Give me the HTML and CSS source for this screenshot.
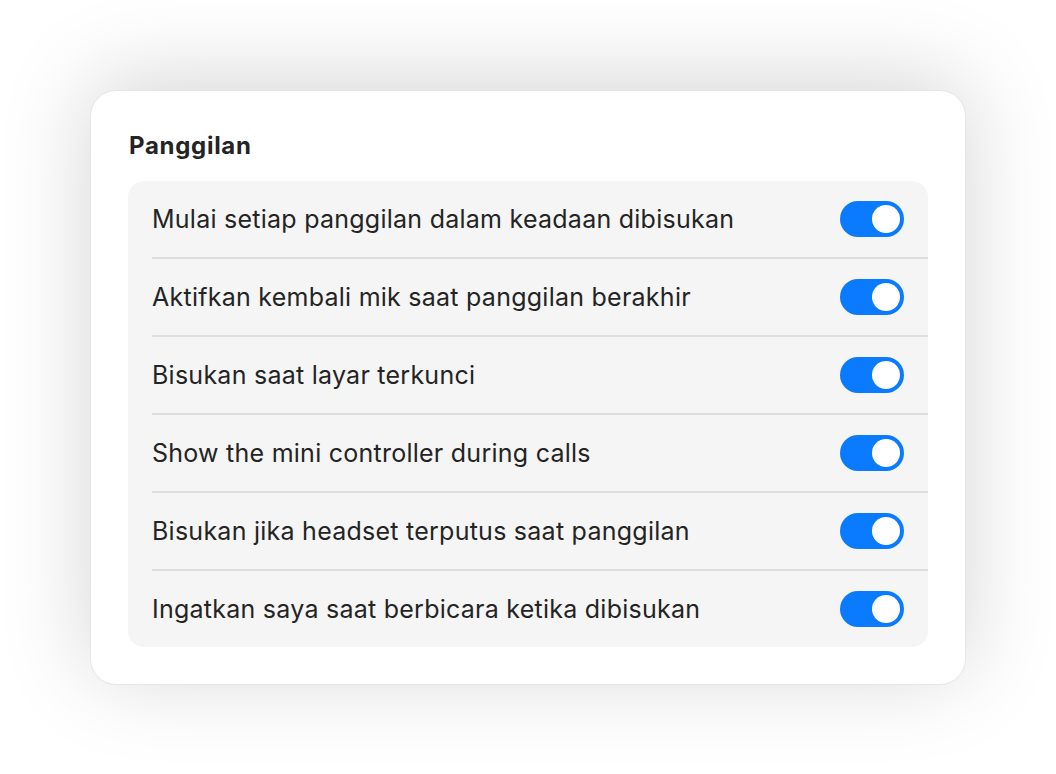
FILE: index.html
```html
<!DOCTYPE html>
<html lang="id">
<head>
<meta charset="utf-8">
<title>Panggilan</title>
<link rel="stylesheet" href="styles.css">
</head>
<body>
<div class="page">
  <section class="card">
    <h2 class="title">Panggilan</h2>
    <div class="group">
      <div class="row"><span class="label">Mulai setiap panggilan dalam keadaan dibisukan</span><span class="toggle on"><span class="knob"></span></span></div>
      <div class="row"><span class="label">Aktifkan kembali mik saat panggilan berakhir</span><span class="toggle on"><span class="knob"></span></span></div>
      <div class="row"><span class="label">Bisukan saat layar terkunci</span><span class="toggle on"><span class="knob"></span></span></div>
      <div class="row"><span class="label">Show the mini controller during calls</span><span class="toggle on"><span class="knob"></span></span></div>
      <div class="row"><span class="label">Bisukan jika headset terputus saat panggilan</span><span class="toggle on"><span class="knob"></span></span></div>
      <div class="row"><span class="label">Ingatkan saya saat berbicara ketika dibisukan</span><span class="toggle on"><span class="knob"></span></span></div>
    </div>
  </section>
</div>
</body>
</html>
```
FILE: styles.css
```css
html, body {
  margin: 0;
  padding: 0;
  background: #ffffff;
}
body {
  font-family: Inter, "Noto Sans", "Liberation Sans", sans-serif;
  color: #222222;
}
.page {
  width: 1056px;
  height: 774px;
  padding: 90px 0 0 90px;
  box-sizing: border-box;
  overflow: hidden;
}
.card {
  width: 876px;
  height: 595px;
  box-sizing: border-box;
  background: #ffffff;
  border: 1px solid #e6e6e6;
  border-radius: 26px;
  padding: 35px 37px 37px 37px;
  box-shadow: 0 -10px 90px rgba(0, 0, 0, 0.17);
}
.title {
  margin: 0 0 15px 1px;
  font-size: 24px;
  line-height: 40px;
  font-weight: 700;
  letter-spacing: 0.7px;
  color: #242424;
}
.group {
  background: #f5f5f5;
  border-radius: 16px;
}
.row {
  display: flex;
  align-items: center;
  justify-content: space-between;
  height: 76px;
  margin-left: 24px;
  padding-right: 24px;
  border-top: 2px solid #dedede;
}
.row:first-child {
  border-top: none;
}
.label {
  font-size: 25px;
  letter-spacing: 0.25px;
  color: #242424;
}
.toggle {
  width: 64px;
  height: 36px;
  border-radius: 18px;
  background: #0a7aff;
  display: flex;
  align-items: center;
  justify-content: flex-end;
  padding: 0 4px;
  box-sizing: border-box;
}
.knob {
  width: 28px;
  height: 28px;
  border-radius: 50%;
  background: #ffffff;
}
```
